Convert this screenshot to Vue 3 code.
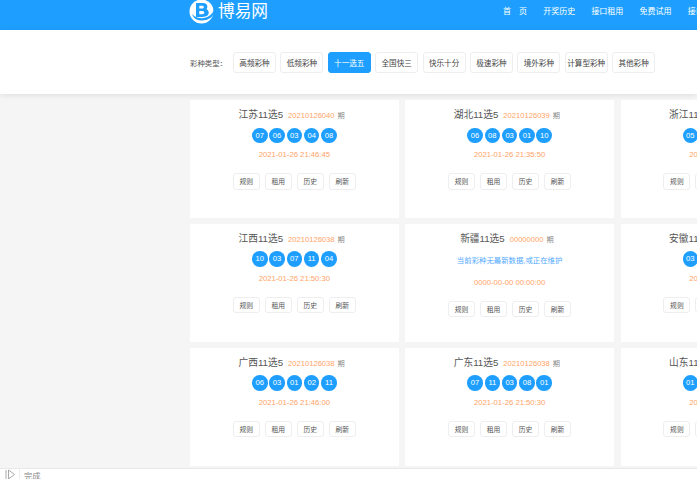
<template>
  <div class="page">
    <header class="top">
      <div class="logo">
        <svg class="logo-mark" width="25" height="25" viewBox="0 0 25 25">
          <circle cx="12.5" cy="11.5" r="12" fill="#fff" />
          <path d="M7 3 H14 C18 3 19.5 6.5 17.5 9.2 C20.5 10.5 20.5 14.5 17.5 16 C16 16.8 14 17 12 17 H7 Z M10.3 5.8 V8.6 H13.2 C15.4 8.6 15.4 5.8 13.2 5.8 Z M10.3 11 V14.2 H13.4 C16 14.2 16 11 13.4 11 Z" fill="#1e9fff" fill-rule="evenodd" />
          <path d="M25 9 C24 15 17 19 10.5 18 C7.5 17.5 5 16.5 3 14 C5 20 10 20.5 13 20.5 C19 20.5 24 17 25 13 Z" fill="#1e9fff" />
        </svg>
        <span class="logo-text">博易网</span>
      </div>
      <nav class="nav">
        <a v-for="item in navItems" :key="item" class="nav-item">{{ item }}</a>
      </nav>
    </header>

    <div class="filter">
      <span class="filter-label">彩种类型：</span>
      <button
        v-for="type in lotteryTypes"
        :key="type"
        :class="['type-btn', type === activeType && 'type-btn--active']"
      >{{ type }}</button>
    </div>

    <main class="main">
      <div class="grid">
        <section v-for="card in cards" :key="card.name" class="card">
          <div class="card-title">
            <span class="card-name">{{ card.name }}</span>
            <span class="card-issue">{{ card.issue }}</span>
            <span class="card-unit">期</span>
          </div>
          <div v-if="card.balls" class="balls">
            <span v-for="(ball, i) in card.balls" :key="i" class="ball">{{ ball }}</span>
          </div>
          <div v-else class="notice">当前彩种无最新数据,或正在维护</div>
          <div class="card-time">{{ card.time }}</div>
          <div class="actions">
            <button v-for="a in actions" :key="a" class="action-btn">{{ a }}</button>
          </div>
        </section>
      </div>
    </main>

    <footer class="status">
      <svg class="status-icon" width="10" height="10" viewBox="0 0 10 10">
        <path d="M1 1 V10 M3.5 1 V10 L9.5 5.5 Z" fill="none" stroke="#aaa" stroke-width="1" />
      </svg>
      <span class="status-text">完成</span>
    </footer>
  </div>
</template>

<script setup>
const navItems = ['首\u3000页', '开奖历史', '接口租用', '免费试用', '接口文档']
const lotteryTypes = ['高频彩种', '低频彩种', '十一选五', '全国快三', '快乐十分', '极速彩种', '境外彩种', '计算型彩种', '其他彩种']
const activeType = '十一选五'
const actions = ['规则', '租用', '历史', '刷新']

const cards = [
  { name: '江苏11选5', issue: '20210126040', balls: ['07', '06', '03', '04', '08'], time: '2021-01-26 21:46:45' },
  { name: '湖北11选5', issue: '20210126039', balls: ['06', '08', '03', '01', '10'], time: '2021-01-26 21:35:50' },
  { name: '浙江11选5', issue: '20210126038', balls: ['05', '02', '09', '11', '07'], time: '2021-01-26 21:40:20' },
  { name: '江西11选5', issue: '20210126038', balls: ['10', '03', '07', '11', '04'], time: '2021-01-26 21:50:30' },
  { name: '新疆11选5', issue: '00000000', balls: null, time: '0000-00-00 00:00:00' },
  { name: '安徽11选5', issue: '20210126038', balls: ['03', '05', '01', '09', '06'], time: '2021-01-26 21:40:10' },
  { name: '广西11选5', issue: '20210126038', balls: ['06', '03', '01', '02', '11'], time: '2021-01-26 21:46:00' },
  { name: '广东11选5', issue: '20210126038', balls: ['07', '11', '03', '08', '01'], time: '2021-01-26 21:50:30' },
  { name: '山东11选5', issue: '20210126040', balls: ['01', '04', '06', '02', '09'], time: '2021-01-26 21:45:30' }
]
</script>

<style>
html, body { margin: 0; overflow: hidden; }
</style>

<style scoped>
.page { width: 697px; height: 479px; display: flex; flex-direction: column; overflow: hidden; background: #f5f5f5; font-family: "Liberation Sans", "Noto Sans CJK SC", sans-serif; }

.top { flex: none; height: 30px; background: #1e9fff; display: flex; justify-content: space-between; padding-left: 189px; color: #fff; overflow: hidden; }
.logo { display: flex; align-items: flex-start; }
.logo-mark { margin-right: 4px; }
.logo-text { font-size: 16.7px; line-height: 24px; white-space: nowrap; }
.nav { display: flex; gap: 16.2px; flex: none; width: 194px; margin-left: auto; padding-top: 6px; overflow: hidden; }
.nav-item { flex: none; font-size: 8px; line-height: 11px; white-space: nowrap; }

.filter { flex: none; height: 64px; background: #fff; box-shadow: 0 1px 6px rgba(0, 0, 0, 0.1); display: flex; align-items: center; padding: 1px 0 0 190px; box-sizing: border-box; position: relative; }
.filter-label { width: 43px; font-size: 7.4px; color: #555; white-space: nowrap; }
.type-btn { flex: none; box-sizing: border-box; width: 43px; height: 21.5px; padding: 0; margin-right: 4.4px; background: #fff; border: 1px solid #eee; border-radius: 3px; font-family: inherit; font-size: 7.6px; color: #444; white-space: nowrap; }
.type-btn--active { background: #1e9fff; border-color: #1e9fff; color: #fff; }

.main { flex: 1; min-height: 0; padding: 6px 0 0 190px; overflow: hidden; }
.grid { display: grid; grid-template-columns: 208.7px 208.7px 208.7px; grid-auto-rows: 117.6px; gap: 6.4px 6.6px; }
.card { background: #fff; display: flex; flex-direction: column; align-items: center; }
.card-title { height: 16px; margin-top: 7px; padding-right: 5.4px; display: flex; align-items: baseline; white-space: nowrap; }
.card-name { font-size: 9.7px; color: #555; }
.card-issue { font-size: 7.6px; color: #ffa366; margin-left: 5px; }
.card-unit { font-size: 7.2px; color: #888; margin-left: 3px; }
.balls { height: 15.5px; margin-top: 4.5px; display: flex; gap: 1.8px; }
.ball { width: 15.5px; height: 15.5px; border-radius: 50%; background: #1e9fff; color: #fff; font-size: 7.6px; line-height: 15.5px; text-align: center; }
.notice { height: 15px; margin: 6px 0 3px; font-size: 7.4px; line-height: 15px; color: #52aaff; white-space: nowrap; }
.card-time { margin-top: 6px; font-size: 7.7px; line-height: 11px; color: #ffa366; white-space: nowrap; }
.actions { display: flex; gap: 5px; margin-top: 13px; }
.action-btn { box-sizing: border-box; width: 27px; height: 16.5px; padding: 0; background: #fff; border: 1px solid #eee; border-radius: 3px; font-family: inherit; font-size: 6.8px; color: #555; }

.status { flex: none; height: 11px; box-sizing: border-box; background: #fff; border-top: 1px solid #e8e8e8; display: flex; align-items: flex-start; padding-left: 5px; overflow: hidden; }
.status-icon { margin-right: 4px; padding-right: 4px; border-right: 1px solid #eee; }
.status-text { font-size: 8.3px; line-height: 14px; color: #888; }
</style>
